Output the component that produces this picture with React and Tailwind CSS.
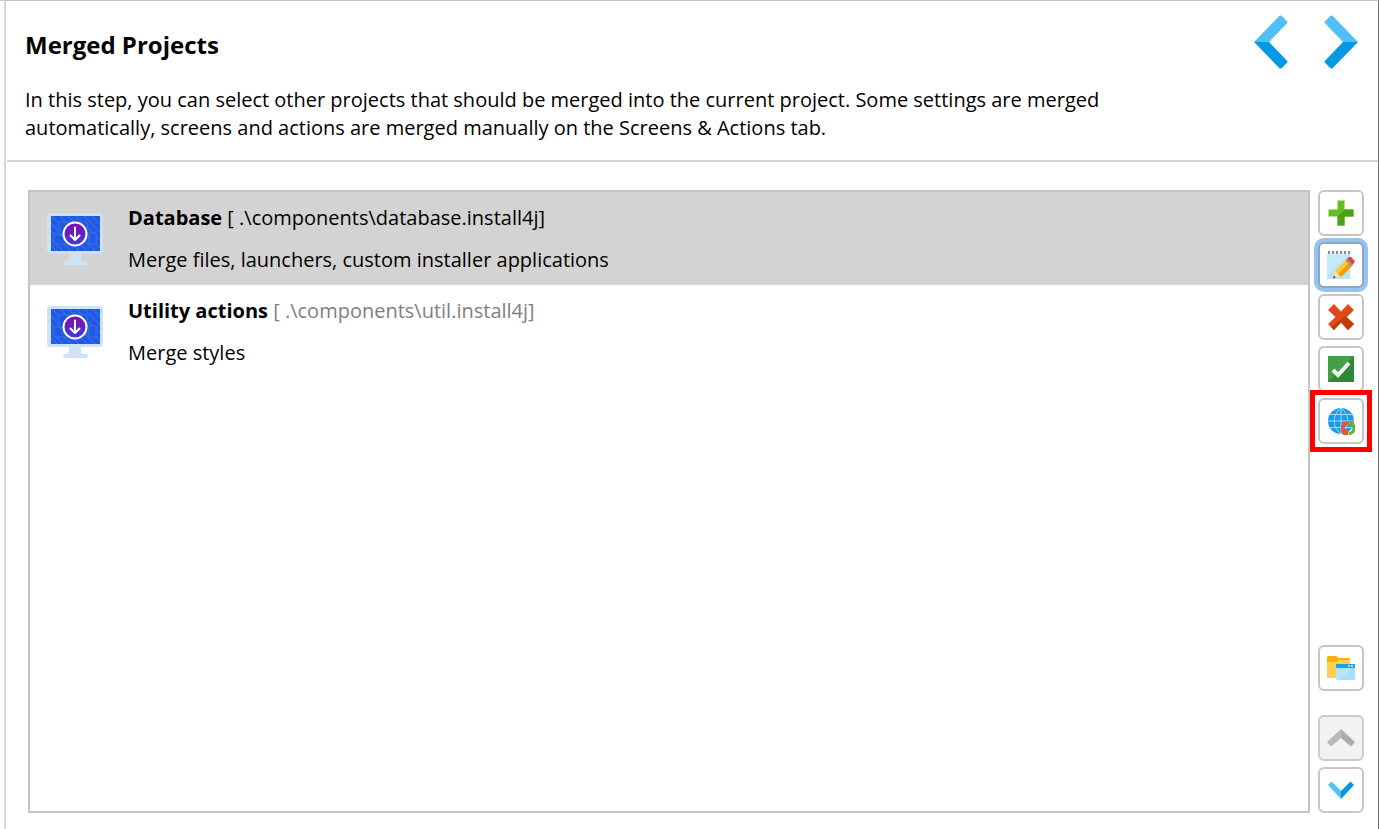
const projects = [
  {
    name: "Database",
    path: ".\\components\\database.install4j",
    summary: "Merge files, launchers, custom installer applications",
    selected: true,
  },
  {
    name: "Utility actions",
    path: ".\\components\\util.install4j",
    summary: "Merge styles",
    selected: false,
  },
];

const MonitorIcon = ({ id }) => (
  <svg width="56" height="52" viewBox="0 0 56 52" aria-hidden="true" className="shrink-0">
    <defs>
      <linearGradient id={`${id}-badge`} x1="0" y1="0" x2="0" y2="1">
        <stop offset="0" stopColor="#8a06a6" />
        <stop offset="1" stopColor="#3b3ee0" />
      </linearGradient>
    </defs>
    <path d="M22 40h12v5c0 2 1 3 3 3h2q2 0 2 2t-2 2H18q-2 0-2-2t2-2h1c2 0 3-1 3-3z" fill="#cfe2f4" />
    <rect x="0" y="0" width="56" height="41" rx="4" fill="#cfe2f4" />
    <rect x="4" y="3" width="49" height="35" fill="#2259e6" />
    <path
      d="M4 10l28 28M4 18l20 20M4 26l12 12M4 32l6 6M5 3l35 35M13 3l35 35M21 3l32 32M29 3l24 24M37 3l16 16M45 3l8 8"
      stroke="#3f75ec"
      strokeWidth="1"
    />
    <path
      d="M12 21V9h28v12M7 21h6l1 2h7v8H7zM42 20h7v11h-7z"
      fill="#1f58e2"
      stroke="#3a72e4"
      strokeWidth="1"
    />
    <circle cx="28" cy="21" r="11.500" fill={`url(#${id}-badge)`} stroke="#fff" strokeWidth="2" />
    <path
      d="M28 14.500v12M23.500 22.500l4.500 4.500l4.500-4.500"
      fill="none"
      stroke="#fff"
      strokeWidth="2"
      strokeLinecap="round"
      strokeLinejoin="round"
    />
  </svg>
);

const ArrowLeft = () => (
  <svg width="34" height="54" viewBox="0 0 34 54" aria-hidden="true">
    <path d="M0 27L25.500 .8q1-.8 2 0l5.500 5.500q1 1 0 2L15 27z" fill="#4fc0f5" />
    <path d="M0 27L25.500 53.200q1 .8 2 0l5.500-5.500q1-1 0-2L15 27z" fill="#0499e4" />
  </svg>
);

const ArrowRight = () => (
  <svg width="34" height="54" viewBox="0 0 34 54" aria-hidden="true">
    <path d="M34 27L8.500 .8q-1-.8-2 0L1 6.300q-1 1 0 2L19 27z" fill="#4fc0f5" />
    <path d="M34 27L8.500 53.200q-1 .8-2 0L1 47.700q-1-1 0-2L19 27z" fill="#0499e4" />
  </svg>
);

const PlusIcon = () => (
  <svg width="28" height="28" viewBox="0 0 28 28" aria-hidden="true">
    <path d="M10.500 1.500h7v9h9v7h-9v9h-7v-9h-9v-7h9z" fill="#67bd20" />
    <path d="M26.500 10.500v7h-9v9h-7v-9l7-7z" fill="#4f9e16" />
  </svg>
);

const EditIcon = () => (
  <svg width="28" height="30" viewBox="0 0 28 30" aria-hidden="true">
    <path d="M0 4h23v25H0z" fill="#b7e3fb" />
    <path d="M0 4h23L0 26z" fill="#c6e9fc" />
    <path d="M2 1v3M6 1v3M10 1v3M14 1v3M18 1v3M22 1v3" stroke="#546e7a" strokeWidth="1.500" />
    <path d="M6 28.500l2-7.500l12-12l6 6l-12 12z" fill="#ffc928" />
    <path d="M11 24l12-12l3 3l-12 12z" fill="#f59b12" />
    <path d="M18.500 10.500l3-3q1.500-1.500 3 0l2.500 2.500q1.500 1.500 0 3l-3 3z" fill="#e4452c" />
    <path d="M18.500 10.500l1.500-1.500l5.500 5.500l-1.500 1.500z" fill="#90a4ae" />
    <path d="M6 28.500l2-7.500l6 6z" fill="#ffdfae" />
    <path d="M6 28.500l1-3l2 2z" fill="#455a64" />
  </svg>
);

const DeleteIcon = () => (
  <svg width="28" height="28" viewBox="0 0 28 28" aria-hidden="true">
    <path d="M7 1l7 7.500l7-7.500l6 6l-7.500 7l7.500 7l-6 6l-7-7.500l-7 7.500l-6-6l7.500-7L1 7z" fill="#e0491a" />
    <path d="M27 7l-7.500 7l7.500 7l-6 6l-7-7.500l-7 7.500l-3-3z" fill="#c33a0e" />
  </svg>
);

const CheckIcon = () => (
  <svg width="28" height="28" viewBox="0 0 28 28" aria-hidden="true">
    <path d="M1 1h26v26H1z" fill="#43a047" />
    <path d="M27 1v26H1z" fill="#2e8636" />
    <path d="M6 15l5 5L22 8" fill="none" stroke="#f5f5f5" strokeWidth="4" />
  </svg>
);

const GlobeIcon = () => (
  <svg width="28" height="28" viewBox="0 0 28 28" aria-hidden="true">
    <circle cx="14" cy="14" r="13" fill="#1e9be6" />
    <path
      d="M14 1v26M1 14h26M3 7.500h22M3 20.500h22M14 1c-9 7-9 19 0 26M14 1c9 7 9 19 0 26"
      fill="none"
      stroke="#a5dafa"
      strokeWidth="1"
    />
    <path d="M21 16c-6 0-7 7-3 10" fill="none" stroke="#ef5330" strokeWidth="3.500" />
    <path d="M14 22h7v6h-5z" fill="#ef5330" />
    <path d="M21.500 26.500c6 0 7-7 3-10" fill="none" stroke="#6cae2c" strokeWidth="3" />
    <path d="M21 14h6l-6 6z" fill="#6cae2c" />
  </svg>
);

const FolderIcon = () => (
  <svg width="28" height="26" viewBox="0 0 28 26" aria-hidden="true">
    <path d="M0 2q0-1 1-1h8q1 0 2 2h11q1 0 1 1v4H0z" fill="#ffb300" />
    <path d="M0 7h10l2-2h11v18H0z" fill="#ffd04f" />
    <path d="M9 9h19v16H9z" fill="#b3e5fc" />
    <path d="M28 11v14H12z" fill="#a5dff9" />
    <path d="M9 9h19v4H9z" fill="#16a5e6" />
    <path d="M21 11h2M24 11h2" stroke="#d8f1fc" strokeWidth="1.500" />
  </svg>
);

const MoveUpIcon = () => (
  <svg width="28" height="20" viewBox="0 0 28 20" aria-hidden="true">
    <path d="M14 1v9L4 18.500L0 14z" fill="#b9b9b9" />
    <path d="M14 1v9l10 8.500l4-4.500z" fill="#acacac" />
  </svg>
);

const MoveDownIcon = () => (
  <svg width="28" height="20" viewBox="0 0 28 20" aria-hidden="true">
    <path d="M14 19v-8L4.500 1.500L1 5z" fill="#4fc3f7" />
    <path d="M14 19v-8l9.500-9.500L27 5z" fill="#0398e2" />
  </svg>
);

const ToolButton = ({ label, focused, disabled, children }) => (
  <button
    type="button"
    aria-label={label}
    disabled={disabled}
    className={`flex h-[46px] w-[46px] shrink-0 items-center justify-center rounded-md border-2 ${
      focused
        ? "border-[#8ba7c8] bg-white ring-4 ring-[#97c3ec]"
        : disabled
          ? "border-[#cccccc] bg-[#f2f2f2]"
          : "border-[#c6c6c6] bg-white"
    }`}
  >
    {children}
  </button>
);

const App = () => {
  return (
    <div className="flex min-h-screen flex-col border-t border-r border-t-[#c6c6c6] border-r-[#6e6e6e] bg-white pl-1 font-['Open_Sans','Noto_Sans',sans-serif] text-xl text-black">
      <div className="flex grow flex-col border-l-2 border-[#d8d8d8]">
        {/* Step header */}
        <header className="ml-px flex justify-between border-b-2 border-[#d4d4d4] pt-7 pr-5 pb-[18px] pl-[18px]">
          <div>
            <h1 className="text-2xl leading-8 font-bold">Merged Projects</h1>
            <p className="mt-[25px] max-w-[1100px] leading-7">
              In this step, you can select other projects that should be merged into the current
              project. Some settings are merged automatically, screens and actions are merged
              manually on the Screens &amp; Actions tab.
            </p>
          </div>
          <nav className="-mt-3.5 flex items-start gap-9">
            <button type="button" aria-label="Previous step">
              <ArrowLeft />
            </button>
            <button type="button" aria-label="Next step">
              <ArrowRight />
            </button>
          </nav>
        </header>

        <main className="flex grow gap-2 pt-7 pr-3.5 pb-4 pl-[22px]">
          {/* Project list */}
          <ul className="grow border-2 border-[#c4c4c4]">
            {projects.map((project, i) => (
              <li
                key={project.name}
                className={`flex items-start gap-[25px] pt-[11px] pb-2.5 pl-[17px] ${
                  project.selected ? "bg-[#d3d3d3]" : "bg-white"
                }`}
              >
                <div className="pt-2.5">
                  <MonitorIcon id={`monitor-${i}`} />
                </div>
                <div>
                  <p className="leading-[30px]">
                    <span className="font-bold">{project.name}</span>{" "}
                    <span className={project.selected ? "" : "text-[#808080]"}>
                      [ {project.path}]
                    </span>
                  </p>
                  <p className="mt-3 leading-[30px]">{project.summary}</p>
                </div>
              </li>
            ))}
          </ul>

          {/* Actions */}
          <div className="flex flex-col gap-1.5">
            <ToolButton label="Add project">
              <PlusIcon />
            </ToolButton>
            <ToolButton label="Edit project" focused>
              <EditIcon />
            </ToolButton>
            <ToolButton label="Remove project">
              <DeleteIcon />
            </ToolButton>
            <ToolButton label="Select merged elements">
              <CheckIcon />
            </ToolButton>
            <div className="relative">
              <ToolButton label="Custom localization">
                <GlobeIcon />
              </ToolButton>
              <span className="pointer-events-none absolute -inset-2 border-5 border-[#ff0000]" />
            </div>
            <div className="mt-auto mb-[18px]">
              <ToolButton label="Open project">
                <FolderIcon />
              </ToolButton>
            </div>
            <ToolButton label="Move up" disabled>
              <MoveUpIcon />
            </ToolButton>
            <ToolButton label="Move down">
              <MoveDownIcon />
            </ToolButton>
          </div>
        </main>
      </div>
    </div>
  );
};

export default App;
